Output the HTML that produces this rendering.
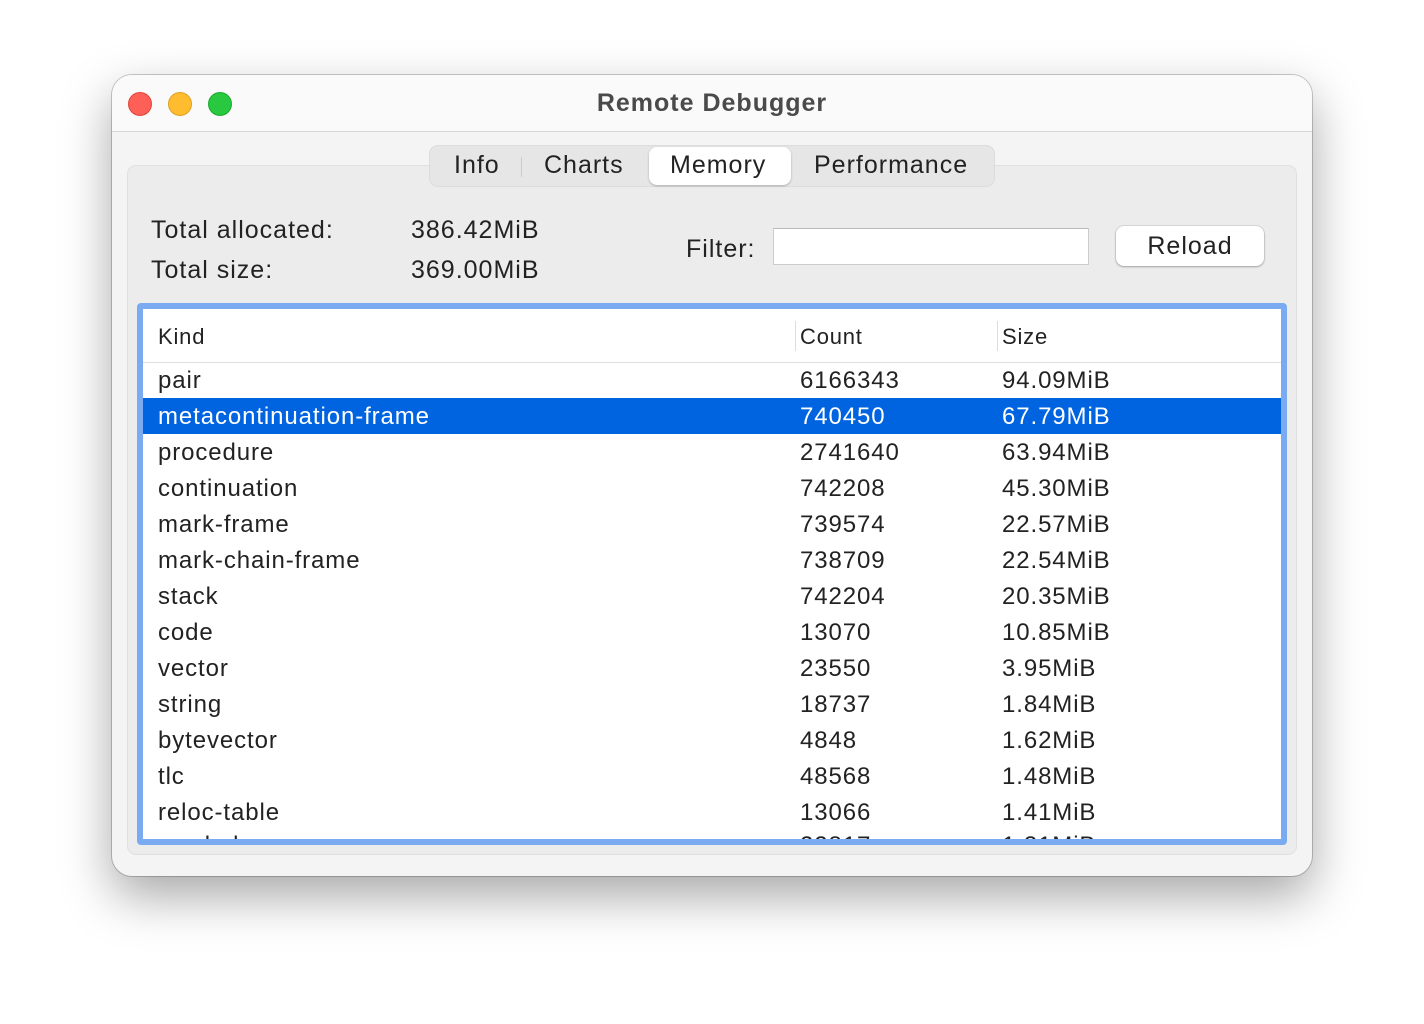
<!DOCTYPE html>
<html><head><meta charset="utf-8"><style>
*{margin:0;padding:0;box-sizing:border-box}
body{width:1424px;height:1024px;background:#fff;font-family:"Liberation Sans",sans-serif;color:#222;position:relative;overflow:hidden}
.win{position:absolute;left:112px;top:75px;width:1200px;height:801px;border-radius:20px;background:#f4f4f4;box-shadow:0 20px 50px rgba(0,0,0,.35),0 0 0 1px rgba(0,0,0,.2);overflow:hidden}
.title{position:absolute;left:0;top:0;width:100%;height:57px;background:#fafafa;border-bottom:1px solid #d8d8d8;text-align:center;line-height:57px;font-weight:bold;font-size:25px;letter-spacing:1px;color:#4a4a4a}
.dot{position:absolute;top:17px;width:24px;height:24px;border-radius:50%}
.group{position:absolute;left:15px;top:90px;width:1170px;height:690px;background:#ececec;border:1px solid #e0e0e0;border-radius:9px}
.tabs{position:absolute;left:317px;top:70px;width:566px;height:42px;background:#e6e6e6;border:1px solid #dcdcdc;border-radius:9px;font-size:25px;letter-spacing:1px}
.tabs span{position:absolute;top:5px}
.sel{position:absolute;left:219px;top:1px;width:142px;height:38px;background:#fff;border-radius:8px;box-shadow:0 1px 2px rgba(0,0,0,.25)}
.lbl{position:absolute;font-size:25px;letter-spacing:1px}
.filter{position:absolute;left:661px;top:153px;width:316px;height:37px;background:#fff;border:1px solid #ccc;border-top-color:#bbb}
.btn{position:absolute;left:1004px;top:151px;width:148px;height:40px;background:#fff;border-radius:8px;box-shadow:0 0 0 1px rgba(0,0,0,.08),0 1px 2px rgba(0,0,0,.25);text-align:center;line-height:40px;font-size:25px;letter-spacing:1px}
.tbl{position:absolute;left:25px;top:228px;width:1150px;height:542px;border:6px solid #7aaaf0;border-radius:4px;background:#fff;overflow:hidden}
.hdr{position:absolute;left:0;top:0;width:100%;height:54px;border-bottom:1px solid #ddd;font-size:22px;letter-spacing:.8px}
.hdr span{position:absolute;top:15px}
.sep{position:absolute;top:12px;width:1px;height:30px;background:#ddd}
.row{position:absolute;left:0;width:100%;height:36px;font-size:24px;letter-spacing:.9px;line-height:38px}
.row span{position:absolute}
.row.s{background:#0064e1;color:#fff}
</style></head><body>
<div class="win">
<div class="title">Remote Debugger
<div class="dot" style="left:16px;background:#fe5f57;border:1px solid #e0443e"></div>
<div class="dot" style="left:56px;background:#febc2e;border:1px solid #dea123"></div>
<div class="dot" style="left:96px;background:#28c840;border:1px solid #1aab29"></div>
</div>
<div class="group"></div>
<div class="tabs"><div class="sel"></div>
<span style="left:24px">Info</span><div style="position:absolute;left:91px;top:11px;width:1px;height:20px;background:#ccc"></div>
<span style="left:114px">Charts</span><span style="left:240px">Memory</span><span style="left:384px">Performance</span></div>
<div class="lbl" style="left:39px;top:141px">Total allocated:</div>
<div class="lbl" style="left:299px;top:141px">386.42MiB</div>
<div class="lbl" style="left:39px;top:181px">Total size:</div>
<div class="lbl" style="left:299px;top:181px">369.00MiB</div>
<div class="lbl" style="left:574px;top:160px">Filter:</div>
<div class="filter"></div>
<div class="btn">Reload</div>
<div class="tbl">
<div class="hdr"><span style="left:15px">Kind</span><div class="sep" style="left:652px"></div><span style="left:657px">Count</span><div class="sep" style="left:854px"></div><span style="left:859px">Size</span></div>
<div class="row" style="top:53px"><span style="left:15px">pair</span><span style="left:657px">6166343</span><span style="left:859px">94.09MiB</span></div>
<div class="row s" style="top:89px"><span style="left:15px">metacontinuation-frame</span><span style="left:657px">740450</span><span style="left:859px">67.79MiB</span></div>
<div class="row" style="top:125px"><span style="left:15px">procedure</span><span style="left:657px">2741640</span><span style="left:859px">63.94MiB</span></div>
<div class="row" style="top:161px"><span style="left:15px">continuation</span><span style="left:657px">742208</span><span style="left:859px">45.30MiB</span></div>
<div class="row" style="top:197px"><span style="left:15px">mark-frame</span><span style="left:657px">739574</span><span style="left:859px">22.57MiB</span></div>
<div class="row" style="top:233px"><span style="left:15px">mark-chain-frame</span><span style="left:657px">738709</span><span style="left:859px">22.54MiB</span></div>
<div class="row" style="top:269px"><span style="left:15px">stack</span><span style="left:657px">742204</span><span style="left:859px">20.35MiB</span></div>
<div class="row" style="top:305px"><span style="left:15px">code</span><span style="left:657px">13070</span><span style="left:859px">10.85MiB</span></div>
<div class="row" style="top:341px"><span style="left:15px">vector</span><span style="left:657px">23550</span><span style="left:859px">3.95MiB</span></div>
<div class="row" style="top:377px"><span style="left:15px">string</span><span style="left:657px">18737</span><span style="left:859px">1.84MiB</span></div>
<div class="row" style="top:413px"><span style="left:15px">bytevector</span><span style="left:657px">4848</span><span style="left:859px">1.62MiB</span></div>
<div class="row" style="top:449px"><span style="left:15px">tlc</span><span style="left:657px">48568</span><span style="left:859px">1.48MiB</span></div>
<div class="row" style="top:485px"><span style="left:15px">reloc-table</span><span style="left:657px">13066</span><span style="left:859px">1.41MiB</span></div>
<div class="row" style="top:518px"><span style="left:15px">symbol</span><span style="left:657px">22817</span><span style="left:859px">1.31MiB</span></div>
</div>
</div>
</body></html>
